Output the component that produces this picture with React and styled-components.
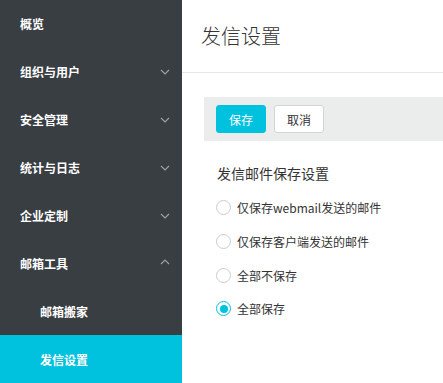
import React, { useState } from "react";
import styled, { createGlobalStyle } from "styled-components";

const Global = createGlobalStyle`
  html, body { margin: 0; padding: 0; background: #fff; }
  body { font-family: "Liberation Sans", "Noto Sans CJK SC", sans-serif; }
  * { box-sizing: border-box; }
`;

const Layout = styled.div`
  display: flex;
  width: 443px;
  height: 383px;
  overflow: hidden;
`;

const Sidebar = styled.nav`
  width: 182px;
  flex: none;
  background: #393e43;
  display: flex;
  flex-direction: column;
  margin-top: -1px;
`;

const NavItem = styled.div`
  height: 48px;
  flex: none;
  display: flex;
  align-items: center;
  justify-content: space-between;
  padding: 0 12px 0 ${(p) => (p.$sub ? 40 : 20)}px;
  color: #fff;
  font-size: 12px;
  font-weight: bold;
  background: ${(p) => (p.$active ? "#00c1de" : "transparent")};
`;

const Chevron = ({ up }) => (
  <svg width="10" height="6" viewBox="0 0 10 6" style={{ marginTop: up ? -2 : 1 }}>
    <path
      d={up ? "M1 5 L5 1 L9 5" : "M1 1 L5 5 L9 1"}
      fill="none"
      stroke="#9aa1a8"
      strokeWidth="1.2"
    />
  </svg>
);

const Main = styled.main`
  flex: 1;
  display: flex;
  flex-direction: column;
  background: #fff;
`;

const Header = styled.div`
  height: 73px;
  border-bottom: 1px solid #e6e6e6;
  display: flex;
  align-items: center;
  padding-left: 19px;
  padding-bottom: 1px;
  font-family: "Noto Sans CJK SC", sans-serif;
  font-size: 20px;
  font-weight: 300;
  color: #333;
`;

const Toolbar = styled.div`
  margin: 24px 0 0 22px;
  height: 44px;
  background: #ebedec;
  display: flex;
  align-items: center;
  gap: 8px;
  padding-left: 12px;
`;

const Button = styled.button`
  width: 50px;
  height: 28px;
  border-radius: 3px;
  font-family: "Noto Sans CJK SC", sans-serif;
  font-size: 12px;
  padding: 0;
  cursor: pointer;
  border: 1px solid ${(p) => (p.$primary ? "#00c1de" : "#d4d4d4")};
  background: ${(p) => (p.$primary ? "#00c1de" : "#fff")};
  color: ${(p) => (p.$primary ? "#fff" : "#333")};
`;

const Section = styled.div`
  padding: 20px 0 0 35px;
  display: flex;
  flex-direction: column;
`;

const SectionTitle = styled.div`
  font-family: "Noto Sans CJK SC", sans-serif;
  font-size: 14px;
  color: #333;
  height: 24px;
  line-height: 24px;
  margin-bottom: 6px;
`;

const RadioRow = styled.label`
  display: flex;
  align-items: center;
  height: 33.7px;
  gap: 6px;
  font-family: "Noto Sans CJK SC", sans-serif;
  font-size: 12px;
  color: #333;
  cursor: pointer;
  margin-left: -1px;
`;

const Circle = styled.span`
  width: 15px;
  height: 15px;
  border-radius: 50%;
  border: 1px solid ${(p) => (p.$checked ? "#00c1de" : "#cccccc")};
  display: flex;
  align-items: center;
  justify-content: center;
  background: #fff;
  &::after {
    content: "";
    width: 8px;
    height: 8px;
    border-radius: 50%;
    background: ${(p) => (p.$checked ? "#00c1de" : "transparent")};
  }
`;

const navItems = [
  { label: "概览" },
  { label: "组织与用户", chevron: "down" },
  { label: "安全管理", chevron: "down" },
  { label: "统计与日志", chevron: "down" },
  { label: "企业定制", chevron: "down" },
  { label: "邮箱工具", chevron: "up" },
  { label: "邮箱搬家", sub: true },
  { label: "发信设置", sub: true, active: true },
];

const options = [
  "仅保存webmail发送的邮件",
  "仅保存客户端发送的邮件",
  "全部不保存",
  "全部保存",
];

export default function App() {
  const [sel, setSel] = useState(3);
  return (
    <>
      <Global />
      <Layout>
        <Sidebar>
          {navItems.map((it) => (
            <NavItem key={it.label} $sub={it.sub} $active={it.active}>
              <span>{it.label}</span>
              {it.chevron && <Chevron up={it.chevron === "up"} />}
            </NavItem>
          ))}
        </Sidebar>
        <Main>
          <Header>发信设置</Header>
          <Toolbar>
            <Button $primary>保存</Button>
            <Button>取消</Button>
          </Toolbar>
          <Section>
            <SectionTitle>发信邮件保存设置</SectionTitle>
            {options.map((o, i) => (
              <RadioRow key={o} onClick={() => setSel(i)}>
                <Circle $checked={sel === i} />
                <span>{o}</span>
              </RadioRow>
            ))}
          </Section>
        </Main>
      </Layout>
    </>
  );
}
